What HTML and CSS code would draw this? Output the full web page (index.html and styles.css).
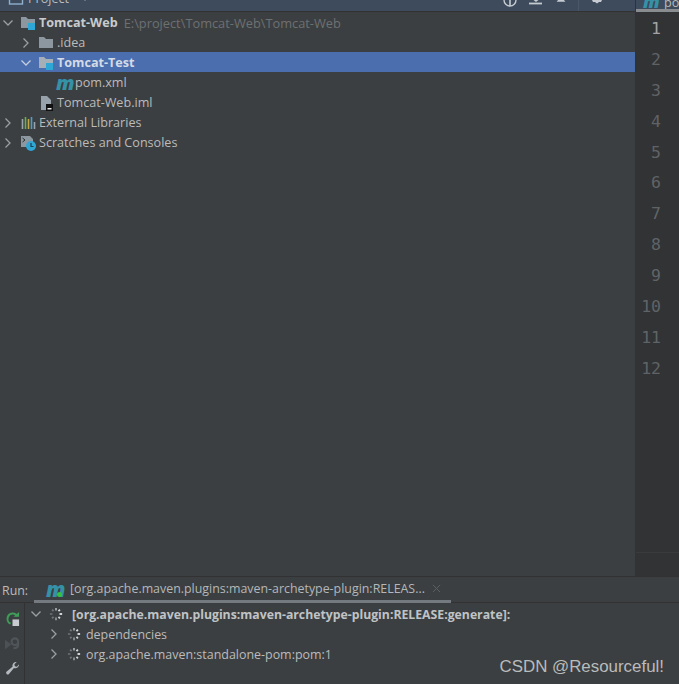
FILE: index.html
```html
<!DOCTYPE html>
<html lang="en">
<head>
<meta charset="utf-8">
<title>Tomcat-Web</title>
<link rel="stylesheet" href="styles.css">
</head>
<body>
<div class="app">
  <div class="main">
    <section class="project">
      <header class="pane-head">
        <div class="pane-title">
          <svg class="ico16" viewBox="0 0 16 16"><rect x="1.5" y="2" width="13" height="12" fill="none" stroke="#8fb0cf" stroke-width="1.4"/></svg>
          <span class="pane-name">Project</span>
          <svg class="ico8" viewBox="0 0 8 8"><path d="M1 3h6L4 7z" fill="#aab2ba"/></svg>
        </div>
        <div class="pane-tools">
          <svg class="tool" viewBox="0 0 16 16"><circle cx="8" cy="6" r="6" fill="none" stroke="#c5cbd1" stroke-width="1.4"/><path d="M8 0v12" stroke="#c5cbd1" stroke-width="1.6"/></svg>
          <svg class="tool" viewBox="0 0 16 16"><path d="M8 0v6M4 4l4 3 4-3" fill="none" stroke="#c5cbd1" stroke-width="1.4"/><path d="M1 9.500h13" stroke="#c5cbd1" stroke-width="1.8"/></svg>
          <svg class="tool small" viewBox="0 0 16 16"><path d="M3 10l5-6 5 6z" fill="#c5cbd1"/></svg>
          <span class="tool-sep"></span>
          <svg class="tool" viewBox="0 0 16 16"><path d="M4 0h8l2 4-2 4H10L8 9.500 6 8H4L2 4z" fill="#c5cbd1"/></svg>
        </div>
      </header>
      <ul class="tree">
        <li class="row lvl0">
          <svg class="chev" viewBox="0 0 12 12"><path d="M1.500 3.500 6 8l4.500-4.500" /></svg>
          <svg class="ico16" viewBox="0 0 16 16"><path d="M1 2h5l2 2h7v9H1z" fill="#8d979f"/><rect x="8" y="8" width="7" height="7" fill="#2ea6d6"/></svg>
          <b class="name">Tomcat-Web</b><span class="path">E:\project\Tomcat-Web\Tomcat-Web</span>
        </li>
        <li class="row lvl1">
          <svg class="chev" viewBox="0 0 12 12"><path d="M3.500 1.500 8 6l-4.500 4.500" /></svg>
          <svg class="ico16" viewBox="0 0 16 16"><path d="M1 2h5l2 2h7v9H1z" fill="#8d979f"/></svg>
          <span class="name">.idea</span>
        </li>
        <li class="row lvl1 selected">
          <svg class="chev" viewBox="0 0 12 12"><path d="M1.500 3.500 6 8l4.500-4.500" /></svg>
          <svg class="ico16" viewBox="0 0 16 16"><path d="M1 2h5l2 2h7v9H1z" fill="#a5afb8"/><rect x="8" y="8" width="7" height="7" fill="#2ea6d6"/></svg>
          <b class="name">Tomcat-Test</b>
        </li>
        <li class="row lvl2">
          <span class="maven">m</span>
          <span class="name">pom.xml</span>
        </li>
        <li class="row lvl1b">
          <svg class="ico16" viewBox="0 0 16 16"><path d="M3 1h6l4 4v10H3z" fill="#98a2aa"/><rect x="8" y="9" width="7" height="7" fill="#111"/><rect x="9.500" y="13" width="4" height="1.500" fill="#eee"/></svg>
          <span class="name">Tomcat-Web.iml</span>
        </li>
        <li class="row lvl0">
          <svg class="chev" viewBox="0 0 12 12"><path d="M3.500 1.500 8 6l-4.500 4.500" /></svg>
          <svg class="ico16" viewBox="0 0 16 16"><path d="M2.500 4v10" stroke="#9aa3ab" stroke-width="1.600"/><path d="M5.500 2v12" stroke="#62b543" stroke-width="1.600"/><path d="M8.500 4v10" stroke="#c9a548" stroke-width="1.600"/><path d="M11.500 2v12" stroke="#3ea3d8" stroke-width="1.600"/><path d="M14.500 7v7" stroke="#9aa3ab" stroke-width="1.600"/></svg>
          <span class="name">External Libraries</span>
        </li>
        <li class="row lvl0">
          <svg class="chev" viewBox="0 0 12 12"><path d="M3.500 1.500 8 6l-4.500 4.500" /></svg>
          <svg class="ico16" viewBox="0 0 16 16"><path d="M1 1h9l3 3v3H8v5H1z" fill="#8d979f"/><path d="M2.500 3 5 5 2.500 7" fill="none" stroke="#2b2d2f" stroke-width="1"/><circle cx="11" cy="11" r="5" fill="#2ea6d6"/><path d="M11 8v3.500h2.500" fill="none" stroke="#1d3f52" stroke-width="1.200"/></svg>
          <span class="name">Scratches and Consoles</span>
        </li>
      </ul>
    </section>
    <section class="editor">
      <div class="editor-tab"><span class="maven tabm">m</span><span class="tab-label">pom.xml</span></div>
      <ol class="gutter">
        <li class="current">1</li><li>2</li><li>3</li><li>4</li><li>5</li><li>6</li><li>7</li><li>8</li><li>9</li><li>10</li><li>11</li><li>12</li>
      </ol>
      <div class="editor-foot"></div>
    </section>
  </div>
  <section class="run">
    <header class="run-head">
      <span class="run-label">Run:</span>
      <div class="run-tab">
        <span class="maven runm">m<i class="dot"></i></span>
        <span class="run-title">[org.apache.maven.plugins:maven-archetype-plugin:RELEAS...</span>
        <svg class="close" viewBox="0 0 10 10"><path d="M1 1l8 8M9 1 1 9"/></svg>
      </div>
    </header>
    <div class="run-body">
      <aside class="run-tools">
        <svg class="ico15" viewBox="0 0 16 16"><path d="M13 5.500A5.500 5.500 0 0 0 3 6.500c-1 3 .5 6 3 7" fill="none" stroke="#3f9b58" stroke-width="2.200"/><path d="M9 6h6V1z" fill="#3f9b58"/><rect x="8" y="9" width="7" height="7" fill="#c8ccd0"/></svg>
        <svg class="ico15" viewBox="0 0 16 16"><path d="M0 4l7 5-7 5z" fill="#4c5155"/><circle cx="10.500" cy="6" r="3.500" fill="none" stroke="#505559" stroke-width="2.200"/><path d="M14 6v3c0 3-2 4-5 4" fill="none" stroke="#505559" stroke-width="2.200"/></svg>
        <svg class="ico15" viewBox="0 0 16 16"><path d="M15 3.500a4 4 0 0 1-5.500 4L4 14a1.800 1.800 0 0 1-2.500-2.500l6.500-5.500a4 4 0 0 1 4.500-5L10 3.500l.5 2.200 2.200.5z" fill="#b4babf"/></svg>
      </aside>
      <ul class="run-tree">
        <li class="run-row r0">
          <svg class="chev" viewBox="0 0 12 12"><path d="M1.500 3.500 6 8l4.500-4.500" /></svg>
          <svg class="spin" viewBox="0 0 16 16"><path d="M8 1v3" stroke="#a6acb1"/><path d="M12.500 3 10.800 4.700" stroke="#d8dbde"/><path d="M15 8h-3" stroke="#e8eaec"/><path d="M12.500 13l-1.700-1.700" stroke="#d0d3d6"/><path d="M8 15v-3" stroke="#8f959a"/><path d="M3.500 13l1.700-1.700" stroke="#70767a"/><path d="M1 8h3" stroke="#666b70"/><path d="M3.500 3l1.700 1.700" stroke="#70767a"/></svg>
          <b class="run-bold">[org.apache.maven.plugins:maven-archetype-plugin:RELEASE:generate]:</b>
        </li>
        <li class="run-row r1">
          <svg class="chev" viewBox="0 0 12 12"><path d="M3.500 1.500 8 6l-4.500 4.500" /></svg>
          <svg class="spin" viewBox="0 0 16 16"><path d="M8 1v3" stroke="#a6acb1"/><path d="M12.500 3 10.800 4.700" stroke="#d8dbde"/><path d="M15 8h-3" stroke="#e8eaec"/><path d="M12.500 13l-1.700-1.700" stroke="#d0d3d6"/><path d="M8 15v-3" stroke="#8f959a"/><path d="M3.500 13l1.700-1.700" stroke="#70767a"/><path d="M1 8h3" stroke="#666b70"/><path d="M3.500 3l1.700 1.700" stroke="#70767a"/></svg>
          <span>dependencies</span>
        </li>
        <li class="run-row r1">
          <svg class="chev" viewBox="0 0 12 12"><path d="M3.500 1.500 8 6l-4.500 4.500" /></svg>
          <svg class="spin" viewBox="0 0 16 16"><path d="M8 1v3" stroke="#a6acb1"/><path d="M12.500 3 10.800 4.700" stroke="#d8dbde"/><path d="M15 8h-3" stroke="#e8eaec"/><path d="M12.500 13l-1.700-1.700" stroke="#d0d3d6"/><path d="M8 15v-3" stroke="#8f959a"/><path d="M3.500 13l1.700-1.700" stroke="#70767a"/><path d="M1 8h3" stroke="#666b70"/><path d="M3.500 3l1.700 1.700" stroke="#70767a"/></svg>
          <span>org.apache.maven:standalone-pom:pom:1</span>
        </li>
      </ul>
    </div>
    <div class="watermark">CSDN @Resourceful!</div>
  </section>
</div>
</body>
</html>
```
FILE: styles.css
```css
* { box-sizing: border-box; }
html, body { margin: 0; padding: 0; }
body {
  width: 679px;
  height: 684px;
  overflow: hidden;
  background: #3c3f41;
  color: #bbbbbb;
  font-family: "Open Sans", "Noto Sans", sans-serif;
  font-size: 12.6px;
}
ul, ol { list-style: none; margin: 0; padding: 0; }
svg { display: block; flex: none; }
.app { display: flex; flex-direction: column; height: 684px; }
.main { display: flex; height: 576px; flex: none; }

.project { width: 635px; flex: none; display: flex; flex-direction: column; }
.pane-head {
  height: 12px;
  flex: none;
  display: flex;
  align-items: flex-end;
  justify-content: space-between;
  background: #3d4b5c;
  border-bottom: 1px solid #323232;
  overflow: hidden;
  padding: 0 30px 0 8px;
}
.pane-title { display: flex; align-items: center; gap: 4px; margin-bottom: 5px; height: 16px; flex: none; }
.pane-name { color: #bbbbbb; }
.ico8 { width: 8px; height: 8px; margin-left: 8px; }
.pane-tools { display: flex; align-items: flex-start; gap: 10px; height: 11px; }
.tool { width: 16px; height: 16px; margin-top: -6px; }
.tool.small { margin-top: -8px; width: 14px; }
.tool-sep { width: 1px; height: 11px; background: #4b5766; }
.ico16 { width: 16px; height: 16px; }
.ico15 { width: 15px; height: 15px; }

.row { height: 20px; padding-top: 1px; display: flex; align-items: center; white-space: nowrap; }
.lvl0 { padding-left: 2px; }
.lvl1 { padding-left: 20px; }
.lvl2 { padding-left: 56px; }
.lvl1b { padding-left: 38px; }
.chev { width: 12px; height: 12px; margin-right: 6px; fill: none; stroke: #9a9fa3; stroke-width: 1.300; }
.row .ico16 { margin-right: 3px; }
.selected { background: #4b6eaf; color: #e0e4ea; }
.selected .chev { stroke: #c2cde0; }
.name { line-height: 19px; }
b.name { color: #c8cbce; font-weight: 700; }
.selected b.name { color: #d4dbe6; }
.path { margin-left: 6px; color: #6d7072; font-size: 12.8px; }
.maven {
  font-family: "Open Sans", sans-serif;
  font-style: italic;
  font-weight: 800;
  color: #3592a6;
  font-size: 20px;
  line-height: 14px;
  width: 19px;
  flex: none;
}

.editor { flex: 1; min-width: 0; background: #313335; border-left: 1px solid #323232; display: flex; flex-direction: column; }
.editor-tab {
  height: 12px;
  flex: none;
  display: flex;
  align-items: flex-end;
  overflow: hidden;
  background: #3d4b5c;
  border-bottom: 3px solid #8a8d8f;
  padding-left: 7px;
  gap: 3px;
}
.tabm { font-size: 18px; width: 18px; margin-bottom: 1px; }
.tab-label { color: #bbbbbb; line-height: 12px; }
.gutter { padding-top: 2px; flex: 1; }
.gutter li {
  height: 30.9px;
  line-height: 30.9px;
  padding-right: 18px;
  text-align: right;
  color: #606366;
  font-family: "DejaVu Sans Mono", monospace;
  font-size: 16.5px;
}
.gutter li.current { color: #a4a3a3; }
.editor-foot { height: 24px; flex: none; border-top: 1px solid #393b3d; }

.run { flex: 1; position: relative; display: flex; flex-direction: column; border-top: 1px solid #323232; }
.run-head { height: 26px; flex: none; display: flex; border-bottom: 1px solid #323232; align-items: stretch; font-size: 12.4px; }
.run-label { width: 34px; flex: none; padding: 5px 0 0 2px; line-height: 18px; }
.run-tab {
  width: 417px;
  flex: none;
  display: flex;
  align-items: center;
  padding: 0 0 2px 12px;
  position: relative;
  white-space: nowrap;
}
.run-tab::after {
  content: "";
  position: absolute;
  left: 0; right: 0; bottom: -1px;
  height: 3px;
  background: #747a80;
}
.runm { font-size: 21px; position: relative; width: 24px; }
.dot { position: absolute; left: 11px; top: 10px; width: 5px; height: 5px; border-radius: 50%; background: #34c240; }
.run-title { color: #b4b7b9; width: 359px; flex: none; overflow: hidden; }
.close { width: 9px; height: 9px; margin-left: 3px; stroke: #5d6063; stroke-width: 1.100; fill: none; }

.run-body { flex: 1; display: flex; min-height: 0; }
.run-tools { width: 25px; flex: none; border-right: 1px solid #323232; display: flex; flex-direction: column; align-items: center; gap: 10px; padding-top: 8px; }
.run-tree { padding-top: 1px; flex: 1; }
.run-row { height: 20px; display: flex; align-items: center; white-space: nowrap; font-size: 12.45px; }
.r0 { padding-left: 5px; }
.r1 { padding-left: 23px; }
.r0 .chev { margin-right: 7px; }
.r1 .chev { margin-right: 7px; }
.spin { width: 14px; height: 14px; margin-right: 9px; stroke-width: 2; fill: none; }
.r1 .spin { margin-right: 5px; }
.run-bold { color: #c0c3c5; font-weight: 700; font-size: 12.25px; }
.watermark {
  position: absolute;
  right: 15px;
  bottom: 7px;
  font-family: "Liberation Sans", sans-serif;
  font-size: 16.9px;
  color: #b9bbbc;
  line-height: 20px;
}
```
